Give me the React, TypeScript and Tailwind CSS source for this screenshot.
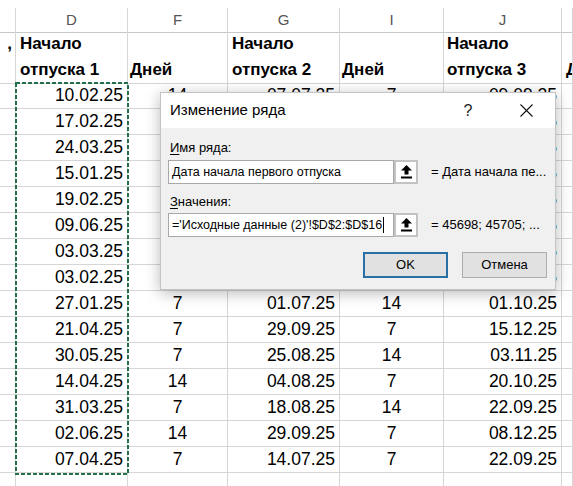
import React from "react";

const cols = "grid grid-cols-[16px_112px_100px_112px_104px_118px_1fr]";
const cell = "border-r border-b border-[#d6d6d6]";

const rows: string[][] = [
  ["10.02.25", "14", "07.07.25", "7", "09.09.25"],
  ["17.02.25", "7", "19.05.25", "14", "22.09.25"],
  ["24.03.25", "14", "16.06.25", "7", "06.10.25"],
  ["15.01.25", "7", "14.04.25", "14", "15.09.25"],
  ["19.02.25", "14", "02.06.25", "7", "11.08.25"],
  ["09.06.25", "7", "18.08.25", "14", "17.11.25"],
  ["03.03.25", "14", "05.05.25", "7", "28.07.25"],
  ["03.02.25", "7", "07.04.25", "14", "16.06.25"],
  ["27.01.25", "7", "01.07.25", "14", "01.10.25"],
  ["21.04.25", "7", "29.09.25", "7", "15.12.25"],
  ["30.05.25", "7", "25.08.25", "14", "03.11.25"],
  ["14.04.25", "14", "04.08.25", "7", "20.10.25"],
  ["31.03.25", "7", "18.08.25", "14", "22.09.25"],
  ["02.06.25", "14", "29.09.25", "7", "08.12.25"],
  ["07.04.25", "7", "14.07.25", "7", "22.09.25"],
];

function RefButton() {
  return (
    <div className="flex h-[24px] w-[24px] items-center justify-center border-2 border-[#c3c3c3] bg-white">
      <svg width="11" height="14" viewBox="0 0 11 14">
        <path d="M5.5 0 L11 5.5 H7.5 V9.5 H3.5 V5.5 H0 Z" fill="#000" />
        <rect x="0" y="11.5" width="11" height="2" fill="#000" />
      </svg>
    </div>
  );
}

function Field({ value, cursor }: { value: string; cursor?: boolean }) {
  return (
    <div className="flex h-[24px] w-[226px] items-center overflow-hidden whitespace-nowrap border border-[#a8a8a8] bg-white pl-[3px] text-[12.5px] text-black">
      {value}
      {cursor ? <span className="ml-px inline-block h-[16px] w-px shrink-0 bg-black" /> : null}
    </div>
  );
}

function SeriesDialog() {
  return (
    <div className="absolute left-[160px] top-[92px] flex h-[198px] w-[396px] flex-col border border-[#c4c4c4] bg-[#f0f0f0] shadow-[0_3px_14px_rgba(0,0,0,0.28)]">
      <div className="flex h-[35px] items-center bg-white pl-[9px]">
        <span className="text-[15px] text-black">Изменение ряда</span>
        <span className="ml-auto flex w-[46px] justify-center text-[16px] text-[#222]">?</span>
        <span className="ml-[12px] mr-[6px] flex w-[46px] justify-center">
          <svg width="13" height="13" viewBox="0 0 13 13">
            <path d="M0.5 0.5 L12.5 12.5 M12.5 0.5 L0.5 12.5" stroke="#111" strokeWidth="1.1" />
          </svg>
        </span>
      </div>
      <div className="flex flex-1 flex-col px-[7px] pt-[12px] text-[13px] text-black">
        <div className="h-[16px] pl-[2px] leading-[16px] underline-offset-2">
          <u>И</u>мя ряда:
        </div>
        <div className="mt-[4px] flex items-center">
          <Field value="Дата начала первого отпуска" />
          <RefButton />
          <span className="ml-[13px] whitespace-nowrap">= Дата начала пе...</span>
        </div>
        <div className="mt-[10px] h-[16px] pl-[2px] leading-[16px] underline-offset-2">
          <u>З</u>начения:
        </div>
        <div className="mt-[3px] flex items-center">
          <Field value="='Исходные данные (2)'!$D$2:$D$16" cursor />
          <RefButton />
          <span className="ml-[13px] whitespace-nowrap">= 45698; 45705; ...</span>
        </div>
        <div className="mt-[15px] flex justify-end gap-[14px] pr-[1px]">
          <button className="flex h-[26px] w-[85px] items-center justify-center border-2 border-[#2a6fa4] bg-[#e1e1e1] text-[13px]">
            OK
          </button>
          <button className="flex h-[26px] w-[85px] items-center justify-center border border-[#adadad] bg-[#e1e1e1] text-[13px]">
            Отмена
          </button>
        </div>
      </div>
    </div>
  );
}

export default function App() {
  return (
    <div className="relative h-[486px] w-[573px] overflow-hidden bg-white font-['Liberation_Sans',Arial,sans-serif]">
      <div className="h-[8px]" />
      <div className={`${cols} h-[23px] text-[15px] text-[#555]`}>
        {["", "D", "F", "G", "I", "J", ""].map((l, i) => (
          <div key={i} className={`${cell} flex items-center justify-center border-b-[#c8c8c8] pt-[1px]`}>
            {l}
          </div>
        ))}
      </div>
      <div className={`${cols} h-[52px] text-[17px] font-bold leading-[26px] text-black`}>
        <div className={`${cell} overflow-hidden pr-[3px] text-right`}>,</div>
        <div className={`${cell} pl-[4px]`}>
          <div>Начало</div>
          <div>отпуска 1</div>
        </div>
        <div className={`${cell} flex items-end pl-[2px]`}>Дней</div>
        <div className={`${cell} pl-[4px]`}>
          <div>Начало</div>
          <div>отпуска 2</div>
        </div>
        <div className={`${cell} flex items-end pl-[2px]`}>Дней</div>
        <div className={`${cell} pl-[3px]`}>
          <div>Начало</div>
          <div>отпуска 3</div>
        </div>
        <div className={`${cell} flex items-end overflow-hidden whitespace-nowrap pl-[4px]`}>Д</div>
      </div>
      {rows.map((r, i) => (
        <div key={i} className={`${cols} h-[26px] text-[17.5px] leading-[25px] text-black`}>
          <div className={cell} />
          <div className={`${cell} pr-[4px] text-right`}>{r[0]}</div>
          <div className={`${cell} text-center`}>{r[1]}</div>
          <div className={`${cell} pr-[4px] text-right`}>{r[2]}</div>
          <div className={`${cell} text-center`}>{r[3]}</div>
          <div className={`${cell} pr-[4px] text-right`}>{r[4]}</div>
          <div className={cell} />
        </div>
      ))}
      <div className={`${cols} h-[26px]`}>
        {Array.from({ length: 7 }).map((_, i) => (
          <div key={i} className={cell} />
        ))}
      </div>

      <svg className="absolute left-[15px] top-[82px]" width="114" height="393">
        <rect x="1" y="1" width="112" height="391" fill="none" stroke="#22704a" strokeWidth="2" strokeDasharray="4 2" />
      </svg>

      <SeriesDialog />
    </div>
  );
}
